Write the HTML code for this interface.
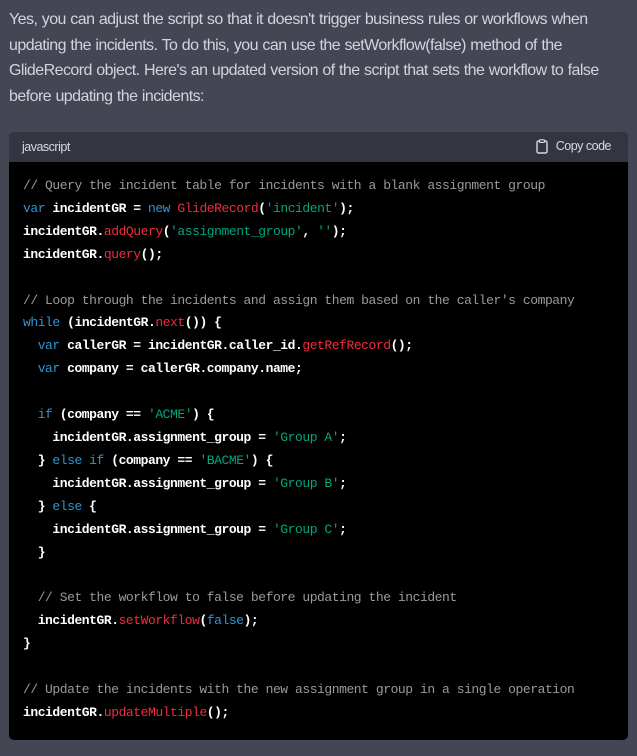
<!DOCTYPE html>
<html><head><meta charset="utf-8"><style>
html,body{margin:0;padding:0;background:#444654;width:637px;height:756px;overflow:hidden}
.p{position:absolute;left:9px;top:7px;width:620px;font-family:"Liberation Sans",sans-serif;font-size:16px;line-height:25.7px;color:#d1d5db;letter-spacing:-0.55px;word-spacing:0.5px;white-space:nowrap}
.blk{position:absolute;left:9px;top:132px;width:619px;height:608px;background:#000;border-radius:5px;overflow:hidden}
.hd{height:30px;background:#343541;color:#d9d9e3;font-family:"Liberation Sans",sans-serif;font-size:12.5px;position:relative;letter-spacing:-0.5px}
.hd .l{position:absolute;left:13px;top:8px}
.hd .r{position:absolute;right:17px;top:7px}
.hd svg{position:absolute;right:80px;top:7px}
pre{margin:0;padding:13px 0 0 14px;font-family:"Liberation Mono",monospace;font-size:13px;line-height:22.9px;color:#fff;font-weight:bold;letter-spacing:-0.45px}
pre .c{color:#9a9a9a;font-weight:normal}
pre .k{color:#2e95d3;font-weight:normal}
pre .f{color:#f22c3d;font-weight:normal}
pre .s{color:#00a67d;font-weight:normal}
</style></head><body>
<div class="p">Yes, you can adjust the script so that it doesn't trigger business rules or workflows when<br>updating the incidents. To do this, you can use the setWorkflow(false) method of the<br>GlideRecord object. Here's an updated version of the script that sets the workflow to false<br>before updating the incidents:</div>
<div class="blk">
<div class="hd"><span class="l">javascript</span>
<svg width="12" height="15" viewBox="0 0 12 15"><rect x="1" y="2" width="10" height="12" rx="1.5" fill="none" stroke="#d9d9e3" stroke-width="1.4"/><rect x="3.5" y="0.8" width="5" height="2.6" rx="0.8" fill="#343541" stroke="#d9d9e3" stroke-width="1.1"/></svg>
<span class="r">Copy code</span></div>
<pre><span class="c">// Query the incident table for incidents with a blank assignment group</span>
<span class="k">var</span> incidentGR = <span class="k">new</span> <span class="f">GlideRecord</span>(<span class="s">'incident'</span>);
incidentGR.<span class="f">addQuery</span>(<span class="s">'assignment_group'</span>, <span class="s">''</span>);
incidentGR.<span class="f">query</span>();

<span class="c">// Loop through the incidents and assign them based on the caller's company</span>
<span class="k">while</span> (incidentGR.<span class="f">next</span>()) {
  <span class="k">var</span> callerGR = incidentGR.caller_id.<span class="f">getRefRecord</span>();
  <span class="k">var</span> company = callerGR.company.name;

  <span class="k">if</span> (company == <span class="s">'ACME'</span>) {
    incidentGR.assignment_group = <span class="s">'Group A'</span>;
  } <span class="k">else if</span> (company == <span class="s">'BACME'</span>) {
    incidentGR.assignment_group = <span class="s">'Group B'</span>;
  } <span class="k">else</span> {
    incidentGR.assignment_group = <span class="s">'Group C'</span>;
  }

  <span class="c">// Set the workflow to false before updating the incident</span>
  incidentGR.<span class="f">setWorkflow</span>(<span class="k">false</span>);
}

<span class="c">// Update the incidents with the new assignment group in a single operation</span>
incidentGR.<span class="f">updateMultiple</span>();</pre>
</div>
</body></html>
